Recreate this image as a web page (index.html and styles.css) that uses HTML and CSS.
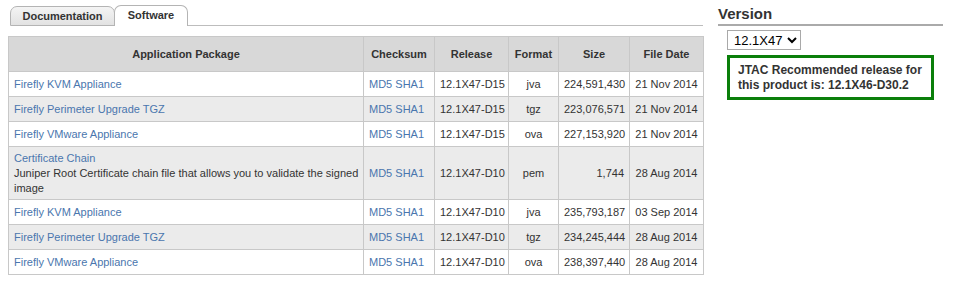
FILE: index.html
```html
<!DOCTYPE html>
<html>
<head>
<meta charset="utf-8">
<link rel="stylesheet" href="styles.css">
</head>
<body>
<div class="page">
  <div class="main">
    <div class="tabs">
      <div class="tab tab-off">Documentation</div>
      <div class="tab tab-on">Software</div>
      <div class="tab-line"></div>
    </div>
    <table class="sw">
      <colgroup>
        <col class="c-app">
        <col class="c-chk">
        <col class="c-rel">
        <col class="c-fmt">
        <col class="c-size">
        <col class="c-date">
      </colgroup>
      <thead>
        <tr>
          <th>Application Package</th>
          <th>Checksum</th>
          <th>Release</th>
          <th>Format</th>
          <th>Size</th>
          <th>File Date</th>
        </tr>
      </thead>
      <tbody>
        <tr>
          <td class="app"><a href="#">Firefly KVM Appliance</a></td>
          <td><a href="#">MD5</a> <a href="#">SHA1</a></td>
          <td class="ctr">12.1X47-D15</td>
          <td class="ctr">jva</td>
          <td class="num">224,591,430</td>
          <td class="ctr">21 Nov 2014</td>
        </tr>
        <tr>
          <td class="app"><a href="#">Firefly Perimeter Upgrade TGZ</a></td>
          <td><a href="#">MD5</a> <a href="#">SHA1</a></td>
          <td class="ctr">12.1X47-D15</td>
          <td class="ctr">tgz</td>
          <td class="num">223,076,571</td>
          <td class="ctr">21 Nov 2014</td>
        </tr>
        <tr>
          <td class="app"><a href="#">Firefly VMware Appliance</a></td>
          <td><a href="#">MD5</a> <a href="#">SHA1</a></td>
          <td class="ctr">12.1X47-D15</td>
          <td class="ctr">ova</td>
          <td class="num">227,153,920</td>
          <td class="ctr">21 Nov 2014</td>
        </tr>
        <tr class="tall">
          <td class="app"><a href="#">Certificate Chain</a><br>Juniper Root Certificate chain file that allows you to validate the signed image</td>
          <td><a href="#">MD5</a> <a href="#">SHA1</a></td>
          <td class="ctr">12.1X47-D10</td>
          <td class="ctr">pem</td>
          <td class="num">1,744</td>
          <td class="ctr">28 Aug 2014</td>
        </tr>
        <tr>
          <td class="app"><a href="#">Firefly KVM Appliance</a></td>
          <td><a href="#">MD5</a> <a href="#">SHA1</a></td>
          <td class="ctr">12.1X47-D10</td>
          <td class="ctr">jva</td>
          <td class="num">235,793,187</td>
          <td class="ctr">03 Sep 2014</td>
        </tr>
        <tr>
          <td class="app"><a href="#">Firefly Perimeter Upgrade TGZ</a></td>
          <td><a href="#">MD5</a> <a href="#">SHA1</a></td>
          <td class="ctr">12.1X47-D10</td>
          <td class="ctr">tgz</td>
          <td class="num">234,245,444</td>
          <td class="ctr">28 Aug 2014</td>
        </tr>
        <tr>
          <td class="app"><a href="#">Firefly VMware Appliance</a></td>
          <td><a href="#">MD5</a> <a href="#">SHA1</a></td>
          <td class="ctr">12.1X47-D10</td>
          <td class="ctr">ova</td>
          <td class="num">238,397,440</td>
          <td class="ctr">28 Aug 2014</td>
        </tr>
      </tbody>
    </table>
  </div>
  <div class="side">
    <h2 class="side-title">Version</h2>
    <div class="side-body">
      <select class="ver">
        <option>12.1X47</option>
      </select>
      <div class="jtac">JTAC Recommended release for this product is: 12.1X46-D30.2</div>
    </div>
  </div>
</div>
</body>
</html>
```

FILE: styles.css
```css
html, body {
  margin: 0;
  padding: 0;
  background: #fff;
}
body {
  font-family: "Liberation Sans", Arial, sans-serif;
  font-size: 11px;
  color: #333;
}
.page {
  display: flex;
  align-items: flex-start;
  padding: 5px 0 0 8px;
  gap: 15px;
}
.main {
  width: 695px;
  display: flex;
  flex-direction: column;
}
.tabs {
  display: flex;
  align-items: flex-end;
  height: 21px;
  margin-bottom: 10px;
}
.tab {
  line-height: 19px;
  font-weight: bold;
  font-size: 11px;
  color: #333;
  border: 1px solid #b4b4b4;
  border-bottom: none;
  border-radius: 7px 7px 0 0;
  text-align: center;
  box-sizing: content-box;
}
.tab-off {
  width: 103px;
  margin-left: 2px;
  background: linear-gradient(#f4f4f4, #e2e2e2);
  border-bottom: 1px solid #b4b4b4;
  height: 18px;
}
.tab-on {
  width: 72px;
  background: #fff;
  height: 20px;
  margin-left: -1px;
}
.tab-line {
  flex: 1;
  border-bottom: 1px solid #bdbdbd;
}
table.sw {
  width: 695px;
  table-layout: fixed;
  border-collapse: collapse;
  border: 1px solid #bcbcbc;
}
.c-app { width: 355px; }
.c-chk { width: 71px; }
.c-rel { width: 74px; }
.c-fmt { width: 50px; }
.c-size { width: 71px; }
.c-date { width: 74px; }
.sw th, .sw td {
  border: 1px solid #c8c8c8;
  padding: 0 5px;
  font-size: 11px;
}
.sw th {
  background: #d8d8d8;
  height: 34px;
  font-weight: bold;
  color: #333;
  text-align: center;
  white-space: nowrap;
}
.sw td {
  height: 24px;
  line-height: 15px;
  color: #333;
}
.sw td.app {
  padding-right: 0;
}
.sw td + td {
  white-space: nowrap;
}
.sw tbody tr:nth-child(even) td {
  background: #ebebeb;
}
.sw tr.tall td {
  height: 52px;
}
.sw a {
  color: #4a76ae;
  text-decoration: none;
}
.ctr { text-align: center; }
.num { text-align: right; }
.side {
  width: 225px;
  display: flex;
  flex-direction: column;
}
.side-title {
  margin: 1px 0 0 0;
  font-size: 15px;
  font-weight: bold;
  color: #333;
  padding-bottom: 3px;
  border-bottom: 2px solid #aaa;
  line-height: 15px;
}
.side-body {
  padding: 4px 0 0 9px;
  display: flex;
  flex-direction: column;
  align-items: flex-start;
  gap: 5px;
}
.ver {
  font-family: "Liberation Sans", Arial, sans-serif;
  font-size: 13px;
  height: 20px;
  width: 74px;
  border: 1px solid #a9a9a9;
  border-radius: 0;
  background: #fff;
  color: #000;
  padding: 0 0 0 2px;
}
.jtac {
  width: 185px;
  border: 3px solid #0a7f0a;
  padding: 5px 8px 4px 8px;
  font-size: 12px;
  font-weight: bold;
  line-height: 15px;
  color: #333;
}
```
